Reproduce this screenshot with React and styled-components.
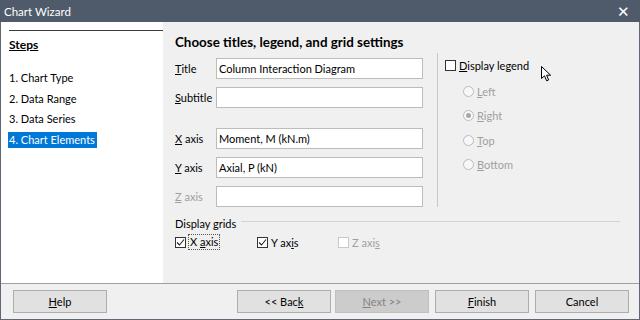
import styled, { createGlobalStyle } from "styled-components";

const GlobalStyle = createGlobalStyle`
  html, body {
    margin: 0;
    padding: 0;
    background: #f0f0f0;
  }
  body {
    font-family: "Segoe UI", Lato, "Noto Sans", sans-serif;
    font-size: 11px;
    color: #000;
  }
`;

const Window = styled.div`
  position: relative;
  width: 640px;
  height: 320px;
  box-sizing: border-box;
  display: flex;
  flex-direction: column;
  background: #f0f0f0;
  border: 1px solid #5d6775;
  border-top: none;
`;

const TitleBar = styled.div`
  height: 22px;
  margin: 0 -1px;
  background: #4f5b6a;
  color: #fff;
  display: flex;
  align-items: center;
  justify-content: space-between;
  padding: 0 10px 0 4px;
  font-size: 11.5px;
`;

const Close = styled.span`
  font-size: 15px;
  line-height: 1;
`;

const Main = styled.div`
  display: flex;
  height: 261px;
`;

const Sidebar = styled.div`
  width: 162px;
  background: #fff;
  padding: 8px 0 0 7px;
  box-sizing: border-box;
`;

const SideRule = styled.div`
  height: 1px;
  background: #3c3c3c;
  margin-left: 1px;
`;

const StepsTitle = styled.div`
  font-weight: bold;
  font-size: 12px;
  text-decoration: underline;
  margin: 6px 0 0 1px;
  height: 16px;
  line-height: 16px;
`;

const StepList = styled.div`
  display: flex;
  flex-direction: column;
  gap: 4.6px;
  margin-top: 17px;
`;

const Step = styled.div`
  align-self: flex-start;
  height: 16px;
  line-height: 16px;
  padding: 0 2px 0 1px;
  background: ${(p) => (p.$active ? "#0078d7" : "transparent")};
  color: ${(p) => (p.$active ? "#fff" : "#000")};
`;

const Content = styled.div`
  flex: 1;
  padding: 12px 0 0 12px;
  display: flex;
  flex-direction: column;
`;

const Heading = styled.div`
  font-weight: bold;
  font-size: 13.4px;
  height: 16px;
  line-height: 16px;
`;

const Upper = styled.div`
  display: flex;
  margin-top: 3px;
`;

const Fields = styled.div`
  display: grid;
  grid-template-columns: 41px 207px;
  row-gap: 7px;
  padding-top: 5px;
  align-items: center;
`;

const Label = styled.label`
  color: ${(p) => (p.$disabled ? "#a0a0a0" : "#000")};
  white-space: nowrap;
`;

const Field = styled.div`
  height: 21px;
  box-sizing: border-box;
  background: #fff;
  border: 1px solid #bcbcbc;
  padding: 0 2px;
  line-height: 19px;
  white-space: nowrap;
`;

const Spacer = styled.div`
  grid-column: 1 / 3;
  height: 5px;
`;

const VRule = styled.div`
  width: 1px;
  background: #c8c8c8;
  margin: 0 7px 0 14px;
  height: 154px;
`;

const Legend = styled.div`
  display: flex;
  flex-direction: column;
  padding-top: 4px;
`;

const Check = styled.span`
  width: 11px;
  height: 11px;
  box-sizing: border-box;
  border: 1px solid ${(p) => (p.$disabled ? "#c8c8c8" : "#333")};
  background: #fff;
  display: inline-flex;
  align-items: center;
  justify-content: center;
  flex-shrink: 0;
`;

const CheckRow = styled.div`
  display: flex;
  align-items: center;
  gap: 3px;
  height: 16px;
  color: ${(p) => (p.$disabled ? "#a0a0a0" : "#000")};
`;

const Radios = styled.div`
  display: flex;
  flex-direction: column;
  gap: 8.5px;
  margin: 10px 0 0 18px;
`;

const Radio = styled.span`
  width: 11px;
  height: 11px;
  box-sizing: border-box;
  border-radius: 50%;
  border: 1px solid #bcbcbc;
  background: #f8f8f8;
  display: inline-flex;
  align-items: center;
  justify-content: center;
  &::after {
    content: "";
    width: 5px;
    height: 5px;
    border-radius: 50%;
    background: ${(p) => (p.$on ? "#a8a8a8" : "transparent")};
  }
`;

const GridsHead = styled.div`
  display: flex;
  align-items: center;
  gap: 5px;
  margin-top: 8px;
  margin-right: 19px;
  height: 16px;
  &::after {
    content: "";
    flex: 1;
    height: 1px;
    background: #d4d4d4;
    margin-top: -3px;
  }
`;

const GridChecks = styled.div`
  display: grid;
  grid-template-columns: 82px 81px auto;
  margin-top: 3px;
`;

const Focus = styled.span`
  outline: 1px dotted #555;
  padding: 0 1px;
  line-height: 14px;
`;

const Footer = styled.div`
  flex: 1;
  border-top: 1px solid #a0a0a0;
  display: flex;
  align-items: flex-start;
  padding: 6px 0 0 12px;
  gap: 4px;
`;

const Button = styled.div`
  width: 94px;
  height: 23px;
  box-sizing: border-box;
  border: 1px solid ${(p) => (p.$disabled ? "#bfbfbf" : "#adadad")};
  background: ${(p) => (p.$disabled ? "#cccccc" : "#e1e1e1")};
  color: ${(p) => (p.$disabled ? "#838383" : "#000")};
  display: flex;
  align-items: center;
  justify-content: center;
  margin-left: ${(p) => p.$gap || 0}px;
`;

const U = styled.span`
  text-decoration: underline;
`;

const Cursor = styled.svg`
  position: absolute;
  left: 540px;
  top: 66px;
`;

const Tick = () => (
  <svg width="9" height="9" viewBox="0 0 9 9">
    <path d="M1 4.5 L3.5 7 L8 1.5" fill="none" stroke="#222" strokeWidth="1.1" />
  </svg>
);

export default function App() {
  return (
    <>
      <GlobalStyle />
      <Window>
        <TitleBar>
          <span>Chart Wizard</span>
          <Close>✕</Close>
        </TitleBar>
        <Main>
          <Sidebar>
            <SideRule />
            <StepsTitle>Steps</StepsTitle>
            <StepList>
              <Step>1. Chart Type</Step>
              <Step>2. Data Range</Step>
              <Step>3. Data Series</Step>
              <Step $active>4. Chart Elements</Step>
            </StepList>
          </Sidebar>
          <Content>
            <Heading>Choose titles, legend, and grid settings</Heading>
            <Upper>
              <Fields>
                <Label><U>T</U>itle</Label>
                <Field>Column Interaction Diagram</Field>
                <Label><U>S</U>ubtitle</Label>
                <Field />
                <Spacer />
                <Label><U>X</U> axis</Label>
                <Field>Moment, M (kN.m)</Field>
                <Label><U>Y</U> axis</Label>
                <Field>Axial, P (kN)</Field>
                <Label $disabled><U>Z</U> axis</Label>
                <Field />
              </Fields>
              <VRule />
              <Legend>
                <CheckRow>
                  <Check />
                  <span><U>D</U>isplay legend</span>
                </CheckRow>
                <Radios>
                  <CheckRow $disabled><Radio /><span><U>L</U>eft</span></CheckRow>
                  <CheckRow $disabled><Radio $on /><span><U>R</U>ight</span></CheckRow>
                  <CheckRow $disabled><Radio /><span><U>T</U>op</span></CheckRow>
                  <CheckRow $disabled><Radio /><span><U>B</U>ottom</span></CheckRow>
                </Radios>
              </Legend>
            </Upper>
            <GridsHead>Display grids</GridsHead>
            <GridChecks>
              <CheckRow>
                <Check><Tick /></Check>
                <Focus>X <U>a</U>xis</Focus>
              </CheckRow>
              <CheckRow>
                <Check><Tick /></Check>
                <span>Y ax<U>i</U>s</span>
              </CheckRow>
              <CheckRow $disabled>
                <Check $disabled />
                <span>Z axi<U>s</U></span>
              </CheckRow>
            </GridChecks>
          </Content>
        </Main>
        <Footer>
          <Button><span><U>H</U>elp</span></Button>
          <Button $gap={126}>&lt;&lt; Bac<U>k</U></Button>
          <Button $disabled><span><U>N</U>ext &gt;&gt;</span></Button>
          <Button $gap={2}><span><U>F</U>inish</span></Button>
          <Button $gap={2}>Cancel</Button>
        </Footer>
        <Cursor width="12" height="16" viewBox="0 0 12 16">
          <path
            d="M0.5 0.5 L0.5 12.5 L3.5 9.8 L5.6 14.8 L7.6 14 L5.6 9.2 L9.6 9.2 Z"
            fill="#fff"
            stroke="#000"
            strokeWidth="1"
            strokeLinejoin="round"
          />
        </Cursor>
      </Window>
    </>
  );
}
